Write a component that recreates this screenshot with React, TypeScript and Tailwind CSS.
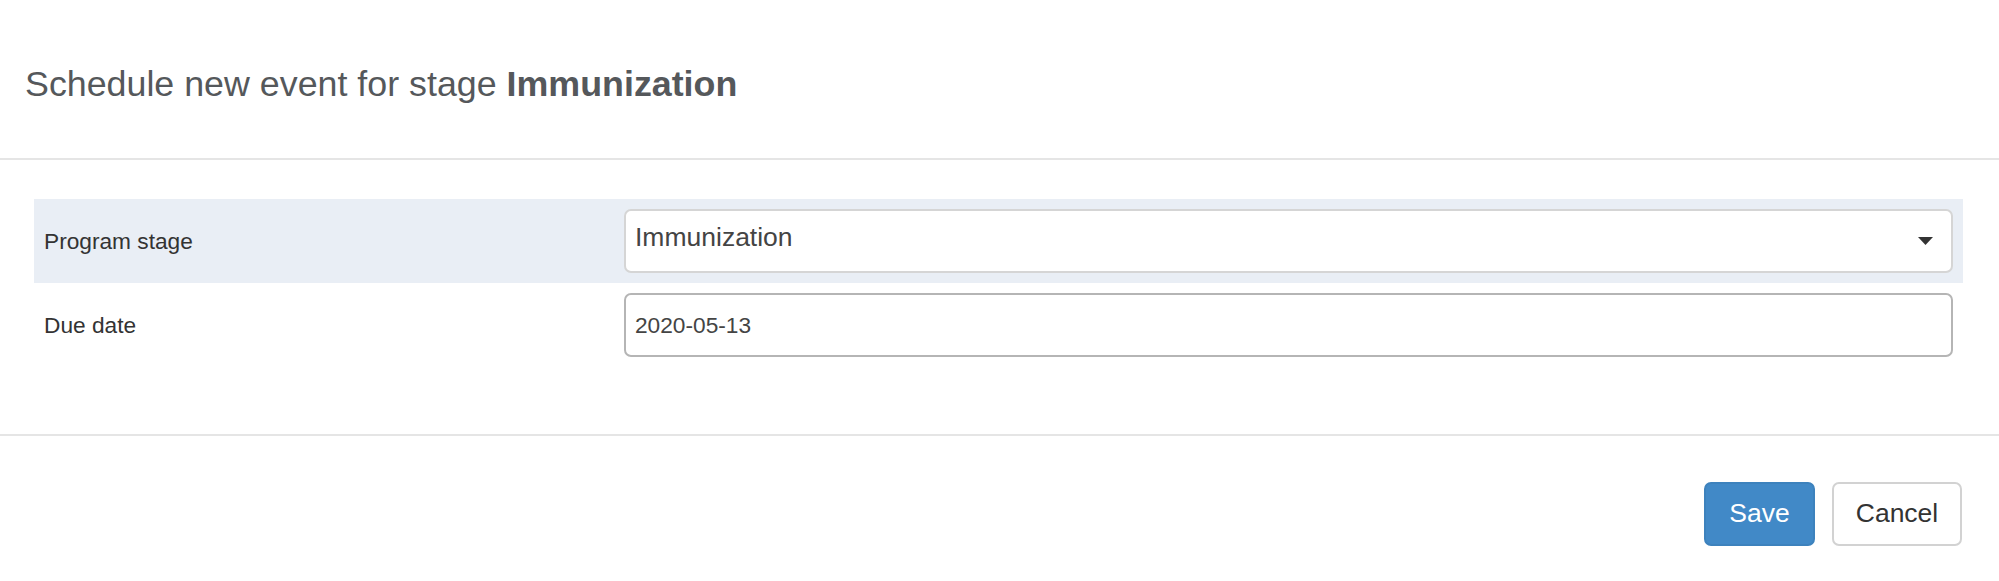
import React from 'react';

const font = { fontFamily: '"Liberation Sans", Arial, Helvetica, sans-serif' };

const FormRow: React.FC<{ label: string; shaded?: boolean; children: React.ReactNode }> = ({
    label,
    shaded,
    children
}) => (
    <div className={`flex items-center h-[84px] ${shaded ? 'bg-[#e9eef5]' : ''}`}>
        <div className="w-[580px] shrink-0 pl-[10px] text-[22.7px] text-[#333]">{label}</div>
        <div className="flex-1 px-[10px]">{children}</div>
    </div>
);

const App: React.FC = () => {
    return (
        <div className="w-[1999px] h-[581px] bg-white overflow-hidden" style={font}>
            {/* header */}
            <div className="h-[160px] border-b-2 border-[#e5e5e5] pt-[67px] pl-[25px]">
                <h4 className="text-[35.8px] leading-[35px] text-[#55585b]">
                    Schedule new event for stage <span className="font-bold">Immunization</span>
                </h4>
            </div>

            {/* body */}
            <div className="h-[276px] border-b-2 border-[#e5e5e5] pt-[39px] pl-[34px] pr-[36px]">
                <FormRow label="Program stage" shaded>
                    <div className="flex items-center h-[64px] bg-white border-2 border-[#d5d5d5] rounded-[7px] pl-[9px] pr-[18px]">
                        <span className="flex-1 text-[26.5px] text-[#444] -mt-[6px]">Immunization</span>
                        <svg width="15" height="8" viewBox="0 0 15 8" className="text-[#333]">
                            <path d="M0 0h15L7.5 8z" fill="currentColor" />
                        </svg>
                    </div>
                </FormRow>
                <FormRow label="Due date">
                    <div className="flex items-center h-[64px] bg-white border-2 border-[#b5b5b5] rounded-[7px] pl-[9px] text-[22.7px] text-[#444]">
                        2020-05-13
                    </div>
                </FormRow>
            </div>

            {/* footer */}
            <div className="flex justify-end gap-[17px] pt-[46px] pr-[37px]">
                <button className="w-[111px] h-[64px] rounded-[7px] bg-[#4189c7] border-2 border-[#3d82bd] text-white text-[26.5px]">
                    Save
                </button>
                <button className="w-[130px] h-[64px] rounded-[7px] bg-white border-2 border-[#d2d2d2] text-[#333] text-[26.5px]">
                    Cancel
                </button>
            </div>
        </div>
    );
};

export default App;
